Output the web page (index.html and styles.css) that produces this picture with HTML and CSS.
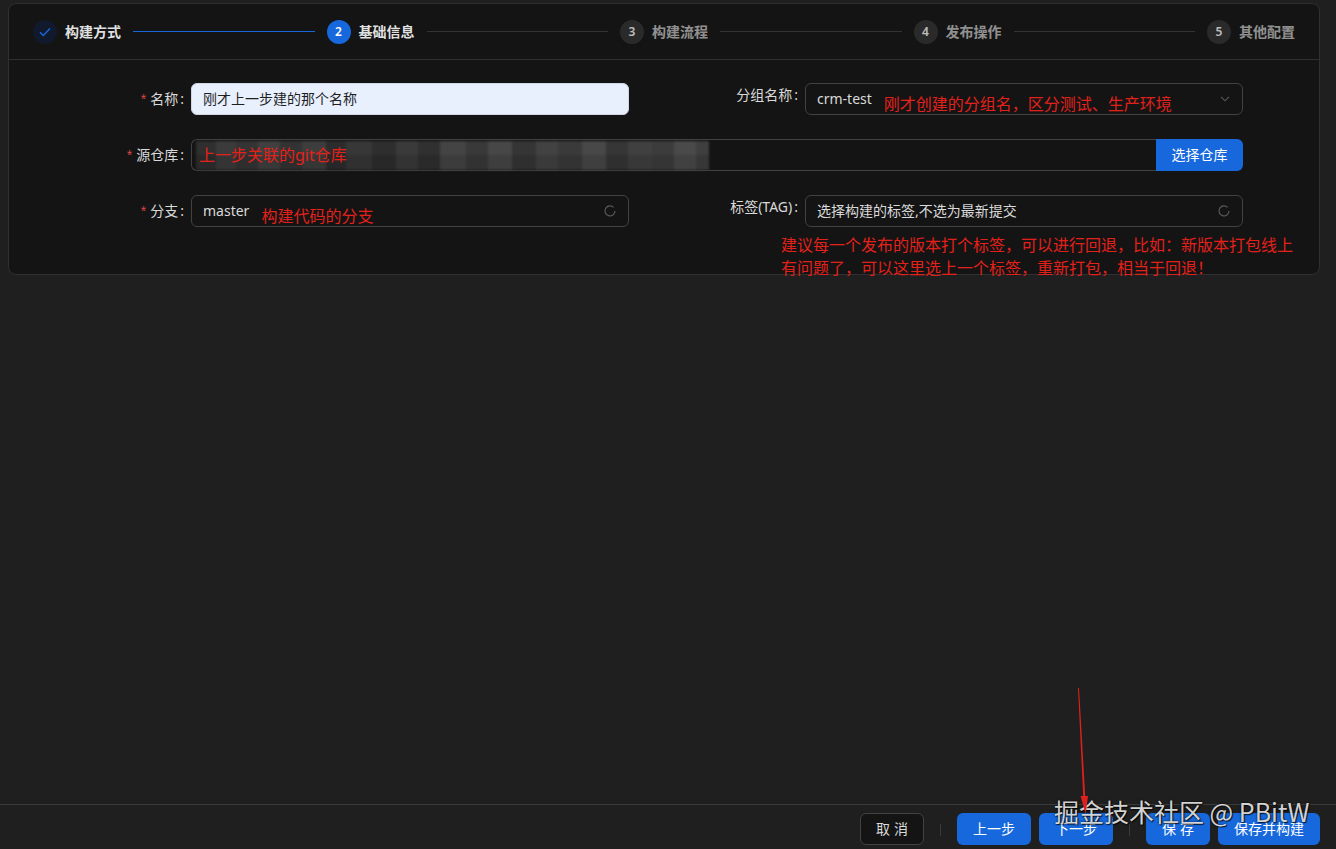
FILE: index.html
```html
<!DOCTYPE html>
<html lang="zh-CN">
<head>
<meta charset="utf-8">
<title>构建配置</title>
<link rel="stylesheet" href="styles.css">
</head>
<body>
<div class="main">
  <div class="card">
    <div class="steps">
      <div class="step finish">
        <span class="step-icon"><svg width="12" height="10" viewBox="0 0 12 10"><path d="M1 5.2 L4.3 8.6 L11 1.4" fill="none" stroke="#1668dc" stroke-width="1.4"/></svg></span>
        <span class="step-title">构建方式</span>
      </div>
      <div class="tail done"></div>
      <div class="step active">
        <span class="step-icon">2</span>
        <span class="step-title">基础信息</span>
      </div>
      <div class="tail"></div>
      <div class="step wait">
        <span class="step-icon">3</span>
        <span class="step-title">构建流程</span>
      </div>
      <div class="tail"></div>
      <div class="step wait">
        <span class="step-icon">4</span>
        <span class="step-title">发布操作</span>
      </div>
      <div class="tail"></div>
      <div class="step wait">
        <span class="step-icon">5</span>
        <span class="step-title">其他配置</span>
      </div>
    </div>
    <div class="form">
      <div class="field">
        <label class="label"><span class="req">*</span>名称<span class="colon">:</span></label>
        <div class="input autofill">刚才上一步建的那个名称</div>
      </div>
      <div class="field right">
        <label class="label">分组名称<span class="colon">:</span></label>
        <div class="input select">
          <span class="val">crm-test</span>
          <span class="note note-inline">刚才创建的分组名，区分测试、生产环境</span>
          <svg class="suffix" width="12" height="8" viewBox="0 0 12 8"><path d="M2 1.8 L6 5.8 L10 1.8" fill="none" stroke="#5a5a5a" stroke-width="1.1"/></svg>
        </div>
      </div>
      <div class="field wide">
        <label class="label"><span class="req">*</span>源仓库<span class="colon">:</span></label>
        <div class="group">
          <div class="input repo">
            <div class="redact"></div>
            <span class="note note-repo">上一步关联的git仓库</span>
          </div>
          <button class="btn primary addon">选择仓库</button>
        </div>
      </div>
      <div class="field">
        <label class="label"><span class="req">*</span>分支<span class="colon">:</span></label>
        <div class="input select">
          <span class="val">master</span>
          <span class="note note-inline">构建代码的分支</span>
          <svg class="suffix" width="14" height="14" viewBox="0 0 14 14"><path d="M10.6 3.4 A5 5 0 1 0 12 7" fill="none" stroke="#5a5a5a" stroke-width="1.2"/></svg>
        </div>
      </div>
      <div class="field right">
        <label class="label">标签(TAG)<span class="colon">:</span></label>
        <div class="input select tag">
          <span class="val">选择构建的标签,不选为最新提交</span>
          <svg class="suffix" width="14" height="14" viewBox="0 0 14 14"><path d="M10.6 3.4 A5 5 0 1 0 12 7" fill="none" stroke="#5a5a5a" stroke-width="1.2"/></svg>
          <div class="note note-tag">建议每一个发布的版本打个标签，可以进行回退，比如：新版本打包线上<br>有问题了，可以这里选上一个标签，重新打包，相当于回退！</div>
        </div>
      </div>
    </div>
  </div>
</div>
<div class="footer">
  <button class="btn default spaced">取消</button>
  <span class="divider"></span>
  <button class="btn primary">上一步</button>
  <button class="btn primary">下一步</button>
  <span class="divider"></span>
  <button class="btn primary spaced">保存</button>
  <button class="btn primary">保存并构建</button>
  <div class="watermark">掘金技术社区 @ PBitW</div>
</div>
<svg class="arrow" width="20" height="140" viewBox="0 0 20 140">
  <path d="M2 2 L3 2 L9.2 110 L12 110 L9.6 128 L4.6 110 L7.2 110 Z" fill="#e0201c"/>
</svg>
</body>
</html>
```
FILE: styles.css
```css
* { box-sizing: border-box; }
html, body { margin: 0; padding: 0; }
body {
  width: 1336px;
  height: 849px;
  background: #1f1f1f;
  font-family: "Noto Sans", "Noto Sans CJK SC", sans-serif;
  font-size: 14px;
  color: rgba(255,255,255,0.85);
  display: flex;
  flex-direction: column;
  position: relative;
  overflow: hidden;
}
.main {
  flex: 1;
  padding: 3px 16px 0 8px;
}
.card {
  background: #141414;
  border: 1px solid #303030;
  border-radius: 8px;
}
.steps {
  height: 56px;
  border-bottom: 1px solid #303030;
  padding: 0 24px;
  display: flex;
  align-items: center;
}
.step {
  display: flex;
  align-items: center;
  gap: 8px;
}
.step-icon {
  width: 24px;
  height: 24px;
  border-radius: 50%;
  display: flex;
  align-items: center;
  justify-content: center;
  font-size: 12px;
  font-weight: 600;
  line-height: 1;
}
.finish .step-icon { background: #111a2c; }
.active .step-icon { background: #1668dc; color: #fff; }
.wait .step-icon { background: #2a2a2a; color: rgba(255,255,255,0.7); }
.step-title {
  font-size: 14px;
  font-weight: 700;
  line-height: 22px;
  color: rgba(255,255,255,0.88);
}
.wait .step-title { color: rgba(255,255,255,0.55); }
.tail {
  flex: 1;
  height: 1px;
  margin: 0 12px;
  background: #333;
}
.tail.done { background: #1668dc; }

.form {
  padding: 23px 0 47px 24px;
  display: grid;
  grid-template-columns: 614px 614px;
  row-gap: 24px;
}
.field {
  display: grid;
  grid-template-columns: 158px 438px;
  align-items: center;
}
.field.wide {
  grid-column: 1 / 3;
  grid-template-columns: 158px 1052px;
}
.label {
  text-align: right;
  padding-right: 7px;
  line-height: 22px;
  color: rgba(255,255,255,0.85);
  white-space: nowrap;
}
.field.right .label { margin-top: -8px; }
.req {
  color: #dc4446;
  margin-right: 4px;
  font-family: "Liberation Sans", sans-serif;
}
.colon { margin-left: 2px; }
.input {
  height: 32px;
  border: 1px solid #424242;
  border-radius: 6px;
  padding: 0 11px;
  display: flex;
  align-items: center;
  line-height: 22px;
  position: relative;
  color: rgba(255,255,255,0.85);
}
.input.autofill {
  background: #e8f0fe;
  border-color: #d0d7e3;
  color: #1f1f1f;
}
.select .suffix { margin-left: auto; }
.val { white-space: nowrap; }
.note {
  color: #e3211b;
  font-size: 16px;
  line-height: 22px;
  white-space: nowrap;
}
.note-inline {
  margin-left: 12px;
  padding-top: 10px;
}
.group {
  display: flex;
}
.group .input.repo {
  flex: 1;
  border-radius: 6px 0 0 6px;
  border-right: none;
}
.redact {
  position: absolute;
  left: 4px;
  top: 1px;
  width: 513px;
  height: 29px;
  filter: blur(1.2px);
  background:
    linear-gradient(180deg, rgba(0,0,0,0) 0, rgba(0,0,0,0) 50%, rgba(0,0,0,0.12) 50%, rgba(0,0,0,0.12) 100%),
    linear-gradient(90deg,
      #2f2f2f 0, #2f2f2f 20px, #3b3b3b 20px, #3b3b3b 40px, #343434 40px, #343434 62px,
      #404040 62px, #404040 84px, #333 84px, #333 106px, #3d3d3d 106px, #3d3d3d 130px,
      #2c2c2c 130px, #2c2c2c 150px, #373737 150px, #373737 176px, #2e2e2e 176px, #2e2e2e 200px,
      #3a3a3a 200px, #3a3a3a 222px, #303030 222px, #303030 244px, #444 244px, #444 270px,
      #393939 270px, #393939 292px, #474747 292px, #474747 316px, #353535 316px, #353535 340px,
      #424242 340px, #424242 362px, #3a3a3a 362px, #3a3a3a 386px, #484848 386px, #484848 410px,
      #363636 410px, #363636 432px, #404040 432px, #404040 456px, #3c3c3c 456px, #3c3c3c 478px,
      #4a4a4a 478px, #4a4a4a 500px, #3f3f3f 500px, #3f3f3f 513px);
}
.note-repo {
  position: absolute;
  left: 7px;
  top: 4px;
}
.btn {
  height: 32px;
  border-radius: 6px;
  padding: 0 15px;
  font-family: "Noto Sans", "Noto Sans CJK SC", sans-serif;
  font-size: 14px;
  line-height: 22px;
  border: 1px solid transparent;
  cursor: pointer;
  white-space: nowrap;
}
.btn.primary {
  background: #1668dc;
  color: #fff;
}
.btn.default {
  background: #141414;
  border-color: #424242;
  color: rgba(255,255,255,0.85);
}
.btn.addon {
  width: 87px;
  border-radius: 0 6px 6px 0;
  padding: 0;
}
.btn.spaced { letter-spacing: 4px; padding: 0 11px 0 15px; }
.tag .note-tag {
  position: absolute;
  left: -25px;
  top: 38px;
  line-height: 23px;
}

.footer {
  height: 45px;
  border-top: 1px solid #3a3a3a;
  padding: 8px 16px 0 0;
  display: flex;
  justify-content: flex-end;
  align-items: flex-start;
  gap: 8px;
  position: relative;
}
.divider {
  width: 1px;
  height: 12px;
  margin: 11px 8px 0;
  background: #3a3a3a;
}
.watermark {
  position: absolute;
  left: 1054px;
  top: -10px;
  font-size: 25px;
  line-height: 32px;
  color: rgba(240,240,240,0.88);
  text-shadow: 0 0 2px rgba(0,0,0,0.9), 1px 1px 1px rgba(0,0,0,0.7);
  white-space: nowrap;
  font-family: "Noto Sans CJK SC", "Noto Sans", sans-serif;
}
.arrow {
  position: absolute;
  left: 1076px;
  top: 686px;
}
```
